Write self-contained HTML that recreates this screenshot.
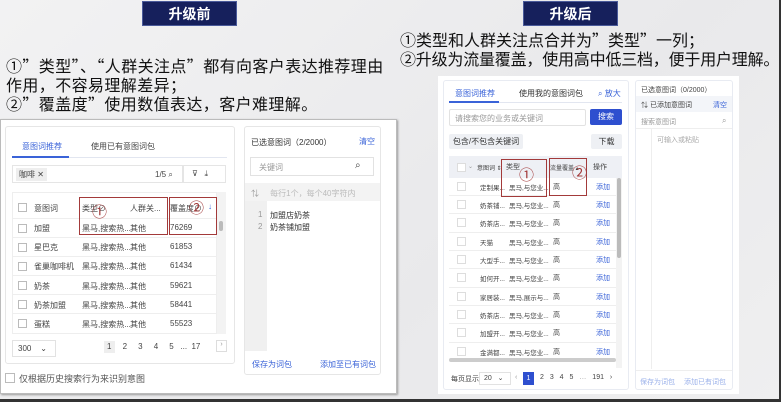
<!DOCTYPE html><html><head><meta charset="utf-8"><style>
*{margin:0;padding:0;box-sizing:border-box}
body{width:781px;height:402px;overflow:hidden;position:relative;background:linear-gradient(135deg,#f2f2f3,#e9e9eb 60%,#efeff0);font-family:"Liberation Sans","Noto Sans CJK SC",sans-serif;color:#333}
.a{position:absolute;white-space:nowrap}
.ban{background:#16205c;color:#fff;font-weight:bold;font-size:14px;text-align:center;line-height:24px;border:1px solid #4a5a9a}
.big{font-size:16px;color:#111;line-height:18px;font-family:"Noto Sans CJK SC",sans-serif}
.s{font-size:8px;color:#444}
.g{color:#999}
.b{color:#3a63d8}
.cb{position:absolute;width:9px;height:9px;border:1px solid #bbb;background:#fff}
.red{position:absolute;border:1.5px solid #a33a3a}
.num{position:absolute;font-size:15px;color:#a33a3a;line-height:15px}
.line{position:absolute;height:1px;background:#eee}
</style></head><body>
<div class="a ban" style="left:142px;top:1px;width:95px;height:25px">升级前</div>
<div class="a ban" style="left:523px;top:1px;width:95px;height:25px">升级后</div>
<div class="a big" style="left:6px;top:56px;letter-spacing:0.4px">①”类型”、“人群关注点”都有向客户表达推荐理由</div>
<div class="a big" style="left:6px;top:75px;letter-spacing:0.4px">作用，不容易理解差异；</div>
<div class="a big" style="left:6px;top:94px;letter-spacing:0.4px">②”覆盖度”使用数值表达，客户难理解。</div>
<div class="a big" style="left:400px;top:30px">①类型和人群关注点合并为”类型”一列；</div>
<div class="a big" style="left:400px;top:49px;letter-spacing:-0.2px">②升级为流量覆盖，使用高中低三档，便于用户理解。</div>

<!-- left screenshot -->
<div class="a" style="left:0;top:119px;width:397px;height:275px;background:#fff;border:1px solid #bbb;box-shadow:1px 1px 2px #999"></div>
<div class="a" style="left:5px;top:126px;width:230px;height:238px;border:1px solid #e6e6e6;border-radius:3px"></div>
<div class="a s b" style="left:22px;top:141px">意图词推荐</div>
<div class="a s" style="left:91px;top:141px">使用已有意图词包</div>
<div class="a" style="left:12px;top:157px;width:215px;height:1px;background:#e2e6f0"></div>
<div class="a" style="left:12px;top:156px;width:57px;height:2px;background:#3a63d8"></div>
<div class="a" style="left:12px;top:165px;width:171px;height:18px;border:1px solid #e5e5e5"></div>
<div class="a s" style="left:16px;top:168px;background:#eee;padding:1px 3px">咖啡 ✕</div>
<div class="a s" style="left:155px;top:170px">1/5 ⌕</div>
<div class="a" style="left:183px;top:165px;width:43px;height:18px;border:1px solid #e5e5e5"></div>
<div class="a s" style="left:192px;top:169px">⊽ &nbsp; ⤓</div>
<div class="a" style="left:12px;top:192px;width:205px;height:142px;border:1px solid #eee"></div>
<div class="a" style="left:217px;top:192px;width:9px;height:142px;background:#f3f3f3"></div>
<div class="a" style="left:219px;top:221px;width:4px;height:10px;background:#bbb;border-radius:2px"></div>
<div class="cb" style="left:18px;top:203px"></div><div class="a s" style="left:34px;top:203px">意图词</div><div class="a s" style="left:82px;top:203px">类型⊘</div><div class="a s" style="left:130px;top:203px">人群关...</div><div class="a s" style="left:170px;top:203px">覆盖度⊘</div><div class="a s b" style="left:208px;top:202px">↓</div>
<div class="line" style="left:12px;top:218px;width:205px"></div>
<div class="cb" style="left:18px;top:224px"></div><div class="a s" style="left:34px;top:223px">加盟</div><div class="a s" style="left:82px;top:223px">黑马,搜索热...</div><div class="a s" style="left:130px;top:223px">其他</div><div class="a s" style="left:170px;top:223px">76269</div>
<div class="line" style="left:12px;top:237px;width:205px"></div>
<div class="cb" style="left:18px;top:243px"></div><div class="a s" style="left:34px;top:242px">星巴克</div><div class="a s" style="left:82px;top:242px">黑马,搜索热...</div><div class="a s" style="left:130px;top:242px">其他</div><div class="a s" style="left:170px;top:242px">61853</div>
<div class="line" style="left:12px;top:256px;width:205px"></div>
<div class="cb" style="left:18px;top:262px"></div><div class="a s" style="left:34px;top:261px">雀巢咖啡机</div><div class="a s" style="left:82px;top:261px">黑马,搜索热...</div><div class="a s" style="left:130px;top:261px">其他</div><div class="a s" style="left:170px;top:261px">61434</div>
<div class="line" style="left:12px;top:275px;width:205px"></div>
<div class="cb" style="left:18px;top:281px"></div><div class="a s" style="left:34px;top:281px">奶茶</div><div class="a s" style="left:82px;top:281px">黑马,搜索热...</div><div class="a s" style="left:130px;top:281px">其他</div><div class="a s" style="left:170px;top:281px">59621</div>
<div class="line" style="left:12px;top:294px;width:205px"></div>
<div class="cb" style="left:18px;top:300px"></div><div class="a s" style="left:34px;top:300px">奶茶加盟</div><div class="a s" style="left:82px;top:300px">黑马,搜索热...</div><div class="a s" style="left:130px;top:300px">其他</div><div class="a s" style="left:170px;top:300px">58441</div>
<div class="line" style="left:12px;top:313px;width:205px"></div>
<div class="cb" style="left:18px;top:319px"></div><div class="a s" style="left:34px;top:319px">蛋糕</div><div class="a s" style="left:82px;top:319px">黑马,搜索热...</div><div class="a s" style="left:130px;top:319px">其他</div><div class="a s" style="left:170px;top:319px">55523</div>
<div class="red" style="left:79px;top:197px;width:89px;height:38px"></div>
<div class="red" style="left:169px;top:197px;width:48px;height:38px"></div>
<div class="num" style="left:92px;top:205px">①</div>
<div class="num" style="left:189px;top:201px">②</div>
<div class="a" style="left:12px;top:340px;width:44px;height:17px;border:1px solid #e2e2e2"></div>
<div class="a s" style="left:18px;top:344px">300 &nbsp; &nbsp;⌄</div>
<div class="a" style="left:104px;top:341px;width:11px;height:12px;background:#eee"></div>
<div class="a s" style="left:107px;top:342px">1 &nbsp; &nbsp; 2 &nbsp; &nbsp; 3 &nbsp; &nbsp; 4 &nbsp; &nbsp; 5 &nbsp; ... &nbsp;17</div>
<div class="a s g" style="left:216px;top:340px;width:11px;height:12px;border:1px solid #ddd;text-align:center;font-size:7px">›</div>
<div class="cb" style="left:5px;top:373px;width:10px;height:10px"></div>
<div class="a" style="left:19px;top:372px;font-size:9px;color:#555">仅根据历史搜索行为来识别意图</div>
<div class="a" style="left:244px;top:126px;width:137px;height:249px;border:1px solid #e6e6e6;border-radius:3px"></div>
<div class="a s" style="left:251px;top:137px;color:#333">已选意图词（2/2000）</div>
<div class="a s b" style="left:359px;top:136px">清空</div>
<div class="a" style="left:250px;top:157px;width:124px;height:19px;border:1px solid #e2e2e2"></div>
<div class="a s g" style="left:259px;top:162px">关键词</div>
<div class="a s" style="left:355px;top:160px;font-size:10px">⌕</div>
<div class="a" style="left:245px;top:183px;width:135px;height:18px;background:#f3f3f3"></div>
<div class="a s" style="left:251px;top:188px;color:#999">⇅ &nbsp; &nbsp; <span style="color:#bbb">每行1个，每个40字符内</span></div>
<div class="a" style="left:245px;top:201px;width:22px;height:150px;background:#f0f0f0"></div>
<div class="a s g" style="left:258px;top:210px">1</div><div class="a s" style="left:270px;top:210px;color:#333">加盟店奶茶</div>
<div class="a s g" style="left:258px;top:222px">2</div><div class="a s" style="left:270px;top:222px;color:#333">奶茶铺加盟</div>
<div class="a s b" style="left:252px;top:359px">保存为词包</div>
<div class="a s b" style="left:320px;top:359px">添加至已有词包</div>

<!-- right screenshot -->
<div class="a" style="left:438px;top:76px;width:301px;height:318px;background:#fff"></div>
<div class="a" style="left:443px;top:80px;width:186px;height:310px;border:1px solid #e8ebf2;border-radius:3px"></div>
<div class="a s b" style="left:455px;top:88px">意图词推荐</div>
<div class="a s" style="left:519px;top:88px;color:#333">使用我的意图词包</div>
<div class="a s b" style="left:598px;top:88px">⌕ 放大</div>
<div class="a" style="left:449px;top:102px;width:173px;height:1px;background:#e2e6f0"></div>
<div class="a" style="left:449px;top:101px;width:50px;height:2px;background:#3a63d8"></div>
<div class="a" style="left:449px;top:109px;width:137px;height:17px;border:1px solid #e2e2e2;border-radius:2px"></div>
<div class="a s g" style="left:455px;top:113px">请搜索您的业务或关键词</div>
<div class="a" style="left:590px;top:109px;width:32px;height:16px;background:#2e4fcf;border-radius:2px;color:#fff;font-size:8px;text-align:center;line-height:16px">搜索</div>
<div class="a" style="left:449px;top:134px;width:74px;height:15px;background:#eef0f4;border-radius:2px;font-size:8px;text-align:center;line-height:15px">包含/不包含关键词</div>
<div class="a" style="left:591px;top:134px;width:31px;height:15px;background:#eef0f4;border-radius:2px;font-size:8px;text-align:center;line-height:15px">下载</div>
<div class="a" style="left:449px;top:156px;width:173px;height:22px;background:#eef0f5"></div>
<div class="cb" style="left:457px;top:163px;border-color:#ddd"></div>
<div class="a" style="left:468px;top:163px;font-size:6px;color:#999">⌄</div>
<div class="a s" style="left:477px;top:163px;font-size:6px">意图词 ⇕</div>
<div class="a s" style="left:506px;top:162px;font-size:7px">类型</div>
<div class="a s" style="left:550px;top:163px;font-size:6px">流量覆盖 ▴</div>
<div class="a s" style="left:593px;top:162px;font-size:7px">操作</div>
<div class="a" style="left:616px;top:178px;width:6px;height:190px;background:#f3f3f3"></div>
<div class="a" style="left:617px;top:178px;width:4px;height:80px;background:#bbb;border-radius:2px"></div>
<div class="a" style="left:449px;top:358px;width:167px;height:4px;background:#ccc;border-radius:2px"></div>

<div class="cb" style="left:457px;top:182px;border-color:#ddd"></div><div class="a s" style="left:480px;top:182px;font-size:6.5px">定制果...</div><div class="a s" style="left:509px;top:182px;font-size:6.5px">黑马,与您业...</div><div class="a s" style="left:553px;top:182px;font-size:7px">高</div><div class="a s b" style="left:596px;top:182px;font-size:7px">添加</div>
<div class="line" style="left:449px;top:195px;width:167px"></div>
<div class="cb" style="left:457px;top:200px;border-color:#ddd"></div><div class="a s" style="left:480px;top:200px;font-size:6.5px">奶茶铺...</div><div class="a s" style="left:509px;top:200px;font-size:6.5px">黑马,与您业...</div><div class="a s" style="left:553px;top:200px;font-size:7px">高</div><div class="a s b" style="left:596px;top:200px;font-size:7px">添加</div>
<div class="line" style="left:449px;top:213px;width:167px"></div>
<div class="cb" style="left:457px;top:218px;border-color:#ddd"></div><div class="a s" style="left:480px;top:218px;font-size:6.5px">奶茶店...</div><div class="a s" style="left:509px;top:218px;font-size:6.5px">黑马,与您业...</div><div class="a s" style="left:553px;top:218px;font-size:7px">高</div><div class="a s b" style="left:596px;top:218px;font-size:7px">添加</div>
<div class="line" style="left:449px;top:232px;width:167px"></div>
<div class="cb" style="left:457px;top:237px;border-color:#ddd"></div><div class="a s" style="left:480px;top:237px;font-size:6.5px">天猫</div><div class="a s" style="left:509px;top:237px;font-size:6.5px">黑马,与您业...</div><div class="a s" style="left:553px;top:237px;font-size:7px">高</div><div class="a s b" style="left:596px;top:237px;font-size:7px">添加</div>
<div class="line" style="left:449px;top:250px;width:167px"></div>
<div class="cb" style="left:457px;top:255px;border-color:#ddd"></div><div class="a s" style="left:480px;top:255px;font-size:6.5px">大型手...</div><div class="a s" style="left:509px;top:255px;font-size:6.5px">黑马,与您业...</div><div class="a s" style="left:553px;top:255px;font-size:7px">高</div><div class="a s b" style="left:596px;top:255px;font-size:7px">添加</div>
<div class="line" style="left:449px;top:268px;width:167px"></div>
<div class="cb" style="left:457px;top:273px;border-color:#ddd"></div><div class="a s" style="left:480px;top:273px;font-size:6.5px">如何开...</div><div class="a s" style="left:509px;top:273px;font-size:6.5px">黑马,与您业...</div><div class="a s" style="left:553px;top:273px;font-size:7px">高</div><div class="a s b" style="left:596px;top:273px;font-size:7px">添加</div>
<div class="line" style="left:449px;top:287px;width:167px"></div>
<div class="cb" style="left:457px;top:292px;border-color:#ddd"></div><div class="a s" style="left:480px;top:292px;font-size:6.5px">家居装...</div><div class="a s" style="left:509px;top:292px;font-size:6.5px">黑马,展示与...</div><div class="a s" style="left:553px;top:292px;font-size:7px">高</div><div class="a s b" style="left:596px;top:292px;font-size:7px">添加</div>
<div class="line" style="left:449px;top:305px;width:167px"></div>
<div class="cb" style="left:457px;top:310px;border-color:#ddd"></div><div class="a s" style="left:480px;top:310px;font-size:6.5px">奶茶店...</div><div class="a s" style="left:509px;top:310px;font-size:6.5px">黑马,与您业...</div><div class="a s" style="left:553px;top:310px;font-size:7px">高</div><div class="a s b" style="left:596px;top:310px;font-size:7px">添加</div>
<div class="line" style="left:449px;top:323px;width:167px"></div>
<div class="cb" style="left:457px;top:328px;border-color:#ddd"></div><div class="a s" style="left:480px;top:328px;font-size:6.5px">加盟开...</div><div class="a s" style="left:509px;top:328px;font-size:6.5px">黑马,与您业...</div><div class="a s" style="left:553px;top:328px;font-size:7px">高</div><div class="a s b" style="left:596px;top:328px;font-size:7px">添加</div>
<div class="line" style="left:449px;top:342px;width:167px"></div>
<div class="cb" style="left:457px;top:347px;border-color:#ddd"></div><div class="a s" style="left:480px;top:347px;font-size:6.5px">金满都...</div><div class="a s" style="left:509px;top:347px;font-size:6.5px">黑马,与您业...</div><div class="a s" style="left:553px;top:347px;font-size:7px">高</div><div class="a s b" style="left:596px;top:347px;font-size:7px">添加</div>

<div class="red" style="left:501px;top:159px;width:46px;height:38px"></div>
<div class="red" style="left:549px;top:158px;width:38px;height:38px"></div>
<div class="num" style="left:519px;top:168px">①</div>
<div class="num" style="left:572px;top:166px">②</div>

<div class="a s" style="left:451px;top:374px;font-size:7px">每页显示</div>
<div class="a" style="left:479px;top:372px;width:32px;height:13px;border:1px solid #e2e2e2"></div>
<div class="a s" style="left:484px;top:374px;font-size:7px">20 &nbsp; ⌄</div>
<div class="a s g" style="left:515px;top:374px;font-size:7px">‹</div>
<div class="a" style="left:523px;top:372px;width:11px;height:13px;background:#2e4fcf;color:#fff;font-size:7px;text-align:center;line-height:13px">1</div>
<div class="a s" style="left:540px;top:374px;font-size:7px;word-spacing:4px">2 3 4 5 <span class="g">…</span> 191 ›</div>

<div class="a" style="left:635px;top:80px;width:98px;height:310px;border:1px solid #e8ebf2;border-radius:3px"></div>
<div class="a s" style="left:641px;top:85px;font-size:7px">已选意图词（0/2000）</div>
<div class="a" style="left:636px;top:96px;width:96px;height:16px;background:#f3f5f9"></div>
<div class="a s" style="left:641px;top:100px;font-size:7px">⇅ 已添加意图词</div>
<div class="a s b" style="left:713px;top:100px;font-size:7px">清空</div>
<div class="a s g" style="left:641px;top:117px;font-size:7px">搜索意图词</div>
<div class="a s g" style="left:722px;top:116px;font-size:8px">⌕</div>
<div class="line" style="left:636px;top:128px;width:96px"></div>
<div class="a" style="left:651px;top:129px;width:1px;height:240px;background:#eee"></div>
<div class="a s g" style="left:657px;top:135px;font-size:7px;color:#aaa">可输入或粘贴</div>
<div class="line" style="left:636px;top:370px;width:96px"></div>
<div class="a s" style="left:640px;top:377px;font-size:7px;color:#9ab0ea">保存为词包</div>
<div class="a s" style="left:684px;top:377px;font-size:7px;color:#9ab0ea">添加已有词包</div>

<div class="a" style="left:779px;top:0;width:2px;height:402px;background:#333"></div>
<div class="a" style="left:0;top:399px;width:781px;height:3px;background:#333"></div>
</body></html>
